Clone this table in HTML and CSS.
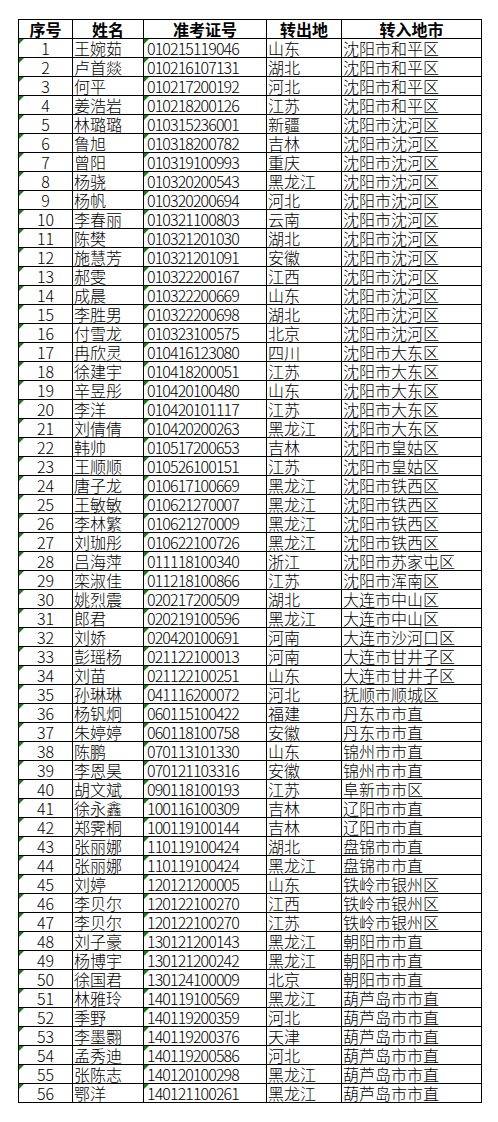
FILE: index.html
```html
<!DOCTYPE html>
<html lang="zh-CN">
<head>
<meta charset="utf-8">
<title>转入名单</title>
<link rel="stylesheet" href="styles.css">
</head>
<body>
<div class="sheet">
<table class="grid">
<colgroup><col class="c1"><col class="c2"><col class="c3"><col class="c4"><col class="c5"></colgroup>
<thead>
<tr><th>序号</th><th>姓名</th><th>准考证号</th><th>转出地</th><th>转入地市</th></tr>
</thead>
<tbody>
<tr><td class="no">1</td><td>王婉茹</td><td class="id">010215119046</td><td>山东</td><td>沈阳市和平区</td></tr>
<tr><td class="no">2</td><td>卢首燚</td><td class="id">010216107131</td><td>湖北</td><td>沈阳市和平区</td></tr>
<tr><td class="no">3</td><td>何平</td><td class="id">010217200192</td><td>河北</td><td>沈阳市和平区</td></tr>
<tr><td class="no">4</td><td>姜浩岩</td><td class="id">010218200126</td><td>江苏</td><td>沈阳市和平区</td></tr>
<tr><td class="no">5</td><td>林璐璐</td><td class="id">010315236001</td><td>新疆</td><td>沈阳市沈河区</td></tr>
<tr><td class="no">6</td><td>鲁旭</td><td class="id">010318200782</td><td>吉林</td><td>沈阳市沈河区</td></tr>
<tr><td class="no">7</td><td>曾阳</td><td class="id">010319100993</td><td>重庆</td><td>沈阳市沈河区</td></tr>
<tr><td class="no">8</td><td>杨骁</td><td class="id">010320200543</td><td>黑龙江</td><td>沈阳市沈河区</td></tr>
<tr><td class="no">9</td><td>杨帆</td><td class="id">010320200694</td><td>河北</td><td>沈阳市沈河区</td></tr>
<tr><td class="no">10</td><td>李春丽</td><td class="id">010321100803</td><td>云南</td><td>沈阳市沈河区</td></tr>
<tr><td class="no">11</td><td>陈樊</td><td class="id">010321201030</td><td>湖北</td><td>沈阳市沈河区</td></tr>
<tr><td class="no">12</td><td>施慧芳</td><td class="id">010321201091</td><td>安徽</td><td>沈阳市沈河区</td></tr>
<tr><td class="no">13</td><td>郝雯</td><td class="id">010322200167</td><td>江西</td><td>沈阳市沈河区</td></tr>
<tr><td class="no">14</td><td>成晨</td><td class="id">010322200669</td><td>山东</td><td>沈阳市沈河区</td></tr>
<tr><td class="no">15</td><td>李胜男</td><td class="id">010322200698</td><td>湖北</td><td>沈阳市沈河区</td></tr>
<tr><td class="no">16</td><td>付雪龙</td><td class="id">010323100575</td><td>北京</td><td>沈阳市沈河区</td></tr>
<tr><td class="no">17</td><td>冉欣灵</td><td class="id">010416123080</td><td>四川</td><td>沈阳市大东区</td></tr>
<tr><td class="no">18</td><td>徐建宇</td><td class="id">010418200051</td><td>江苏</td><td>沈阳市大东区</td></tr>
<tr><td class="no">19</td><td>辛昱彤</td><td class="id">010420100480</td><td>山东</td><td>沈阳市大东区</td></tr>
<tr><td class="no">20</td><td>李洋</td><td class="id">010420101117</td><td>江苏</td><td>沈阳市大东区</td></tr>
<tr><td class="no">21</td><td>刘倩倩</td><td class="id">010420200263</td><td>黑龙江</td><td>沈阳市大东区</td></tr>
<tr><td class="no">22</td><td>韩帅</td><td class="id">010517200653</td><td>吉林</td><td>沈阳市皇姑区</td></tr>
<tr><td class="no">23</td><td>王顺顺</td><td class="id">010526100151</td><td>江苏</td><td>沈阳市皇姑区</td></tr>
<tr><td class="no">24</td><td>唐子龙</td><td class="id">010617100669</td><td>黑龙江</td><td>沈阳市铁西区</td></tr>
<tr><td class="no">25</td><td>王敏敏</td><td class="id">010621270007</td><td>黑龙江</td><td>沈阳市铁西区</td></tr>
<tr><td class="no">26</td><td>李林繁</td><td class="id">010621270009</td><td>黑龙江</td><td>沈阳市铁西区</td></tr>
<tr><td class="no">27</td><td>刘珈彤</td><td class="id">010622100726</td><td>黑龙江</td><td>沈阳市铁西区</td></tr>
<tr><td class="no">28</td><td>吕海萍</td><td class="id">011118100340</td><td>浙江</td><td>沈阳市苏家屯区</td></tr>
<tr><td class="no">29</td><td>栾淑佳</td><td class="id">011218100866</td><td>江苏</td><td>沈阳市浑南区</td></tr>
<tr><td class="no">30</td><td>姚烈震</td><td class="id">020217200509</td><td>湖北</td><td>大连市中山区</td></tr>
<tr><td class="no">31</td><td>郎君</td><td class="id">020219100596</td><td>黑龙江</td><td>大连市中山区</td></tr>
<tr><td class="no">32</td><td>刘娇</td><td class="id">020420100691</td><td>河南</td><td>大连市沙河口区</td></tr>
<tr><td class="no">33</td><td>彭瑶杨</td><td class="id">021122100013</td><td>河南</td><td>大连市甘井子区</td></tr>
<tr><td class="no">34</td><td>刘苗</td><td class="id">021122100251</td><td>山东</td><td>大连市甘井子区</td></tr>
<tr><td class="no">35</td><td>孙琳琳</td><td class="id">041116200072</td><td>河北</td><td>抚顺市顺城区</td></tr>
<tr><td class="no">36</td><td>杨钒炯</td><td class="id">060115100422</td><td>福建</td><td>丹东市市直</td></tr>
<tr><td class="no">37</td><td>朱婷婷</td><td class="id">060118100758</td><td>安徽</td><td>丹东市市直</td></tr>
<tr><td class="no">38</td><td>陈鹏</td><td class="id">070113101330</td><td>山东</td><td>锦州市市直</td></tr>
<tr><td class="no">39</td><td>李恩昊</td><td class="id">070121103316</td><td>安徽</td><td>锦州市市直</td></tr>
<tr><td class="no">40</td><td>胡文斌</td><td class="id">090118100193</td><td>江苏</td><td>阜新市市区</td></tr>
<tr><td class="no">41</td><td>徐永鑫</td><td class="id">100116100309</td><td>吉林</td><td>辽阳市市直</td></tr>
<tr><td class="no">42</td><td>郑霁桐</td><td class="id">100119100144</td><td>吉林</td><td>辽阳市市直</td></tr>
<tr><td class="no">43</td><td>张丽娜</td><td class="id">110119100424</td><td>湖北</td><td>盘锦市市直</td></tr>
<tr><td class="no">44</td><td>张丽娜</td><td class="id">110119100424</td><td>黑龙江</td><td>盘锦市市直</td></tr>
<tr><td class="no">45</td><td>刘婷</td><td class="id">120121200005</td><td>山东</td><td>铁岭市银州区</td></tr>
<tr><td class="no">46</td><td>李贝尔</td><td class="id">120122100270</td><td>江西</td><td>铁岭市银州区</td></tr>
<tr><td class="no">47</td><td>李贝尔</td><td class="id">120122100270</td><td>江苏</td><td>铁岭市银州区</td></tr>
<tr><td class="no">48</td><td>刘子豪</td><td class="id">130121200143</td><td>黑龙江</td><td>朝阳市市直</td></tr>
<tr><td class="no">49</td><td>杨博宇</td><td class="id">130121200242</td><td>黑龙江</td><td>朝阳市市直</td></tr>
<tr><td class="no">50</td><td>徐国君</td><td class="id">130124100009</td><td>北京</td><td>朝阳市市直</td></tr>
<tr><td class="no">51</td><td>林雅玲</td><td class="id">140119100569</td><td>黑龙江</td><td>葫芦岛市市直</td></tr>
<tr><td class="no">52</td><td>季野</td><td class="id">140119200359</td><td>河北</td><td>葫芦岛市市直</td></tr>
<tr><td class="no">53</td><td>李墨翾</td><td class="id">140119200376</td><td>天津</td><td>葫芦岛市市直</td></tr>
<tr><td class="no">54</td><td>孟秀迪</td><td class="id">140119200586</td><td>河北</td><td>葫芦岛市市直</td></tr>
<tr><td class="no">55</td><td>张陈志</td><td class="id">140120100298</td><td>黑龙江</td><td>葫芦岛市市直</td></tr>
<tr><td class="no">56</td><td>鄂洋</td><td class="id">140121100261</td><td>黑龙江</td><td>葫芦岛市市直</td></tr>
</tbody>
</table>
</div>
</body>
</html>
```

FILE: styles.css
```css
html, body {
  margin: 0;
  padding: 0;
  background: #ffffff;
}

.sheet {
  padding: 19px 0 0 18px;
}

.grid {
  border-collapse: collapse;
  table-layout: fixed;
  width: 463px;
  font-family: "Noto Sans CJK SC", "Noto Sans", sans-serif;
  font-size: 16px;
  font-weight: 300;
  color: #000;
}

.c1 { width: 54px; }
.c2 { width: 71px; }
.c3 { width: 123px; }
.c4 { width: 75px; }
.c5 { width: 140px; }

.grid th,
.grid td {
  border: 1px solid #000;
  height: 18px;
  padding: 0 0 0 1px;
  line-height: 18px;
  white-space: nowrap;
  text-align: left;
  vertical-align: bottom;
}

.grid th {
  font-weight: bold;
  text-align: center;
  padding: 0;
}

.grid td.no {
  text-align: center;
  position: relative;
  padding: 0;
}

.grid td.id {
  position: relative;
  padding-left: 3px;
  letter-spacing: -0.9px;
}

.grid td.no::before,
.grid td.id::before {
  content: "";
  position: absolute;
  left: 0;
  top: 0;
  width: 0;
  height: 0;
  border-top: 5px solid #108010;
  border-right: 5px solid transparent;
}
```
